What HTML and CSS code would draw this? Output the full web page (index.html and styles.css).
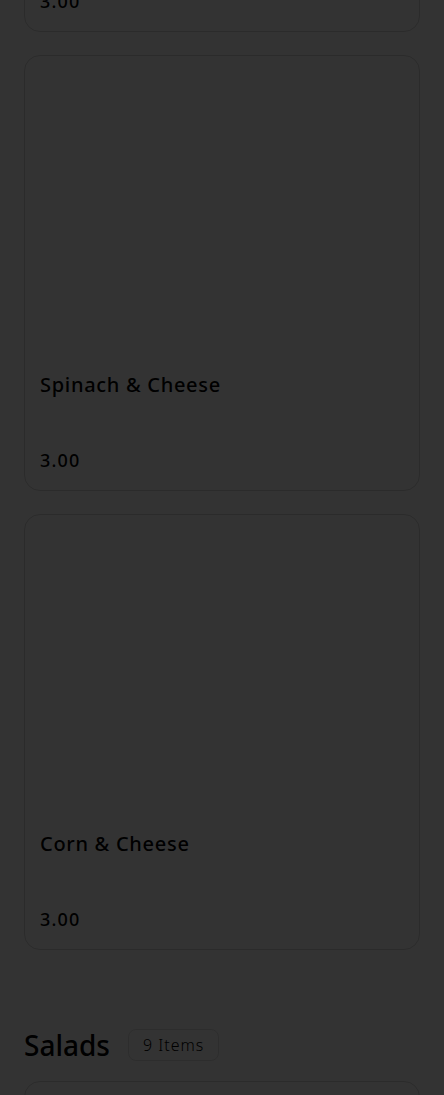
FILE: index.html
```html
<!DOCTYPE html>
<html lang="en">
<head>
<meta charset="utf-8">
<title>Menu</title>
<link rel="stylesheet" href="styles.css">
</head>
<body>
<main class="menu">
  <section class="category category-first">
    <div class="items">
      <article class="item">
        <div class="item-image"></div>
        <div class="item-body">
          <h3 class="item-name">Cheese</h3>
          <p class="item-price">3.00</p>
        </div>
      </article>
      <article class="item">
        <div class="item-image"></div>
        <div class="item-body">
          <h3 class="item-name">Spinach &amp; Cheese</h3>
          <p class="item-price">3.00</p>
        </div>
      </article>
      <article class="item">
        <div class="item-image"></div>
        <div class="item-body">
          <h3 class="item-name">Corn &amp; Cheese</h3>
          <p class="item-price">3.00</p>
        </div>
      </article>
    </div>
  </section>
  <section class="category">
    <header class="category-head">
      <h2 class="category-title">Salads</h2>
      <span class="category-count">9 Items</span>
    </header>
    <div class="items">
      <article class="item">
        <div class="item-image"></div>
        <div class="item-body">
          <h3 class="item-name">Salad</h3>
          <p class="item-price">3.00</p>
        </div>
      </article>
    </div>
  </section>
</main>
<div class="backdrop"></div>
</body>
</html>
```
FILE: styles.css
```css
* { box-sizing: border-box; }
html, body { margin: 0; padding: 0; }
body {
  background: #ffffff;
  font-family: "Noto Sans", "Open Sans", sans-serif;
  color: #000;
  overflow: hidden;
  height: 1095px;
}
.menu {
  padding: 0 24px;
  margin-top: -404px;
}
.category { display: flex; flex-direction: column; }
.category + .category { margin-top: 79px; }
.items { display: flex; flex-direction: column; gap: 23px; }
.item {
  height: 436px;
  border: 1px solid #d6d6d6;
  border-radius: 16px;
  display: flex;
  flex-direction: column;
  background: #fff;
}
.item-image { height: 300px; flex: none; }
.item-body {
  flex: 1;
  display: flex;
  flex-direction: column;
  padding: 16px 15px 18px;
}
.item-name {
  margin: 0;
  font-size: 20px;
  line-height: 26px;
  font-weight: 500;
  letter-spacing: 0.7px;
}
.item-price {
  margin: auto 0 0;
  font-size: 18px;
  line-height: 24px;
  font-weight: 500;
  letter-spacing: 1.2px;
}
.category-head {
  display: flex;
  align-items: center;
  gap: 18px;
  height: 32px;
  margin-bottom: 20px;
}
.category-title {
  margin: 0;
  font-size: 28px;
  line-height: 32px;
  font-weight: 500;
}
.category-count {
  border: 1px solid #e2e2e2;
  border-radius: 8px;
  padding: 4px 14px;
  font-size: 16px;
  line-height: 22px;
  font-weight: 300;
  letter-spacing: 1px;
}
.backdrop {
  position: fixed;
  inset: 0;
  background: rgba(0, 0, 0, 0.8);
}
```
